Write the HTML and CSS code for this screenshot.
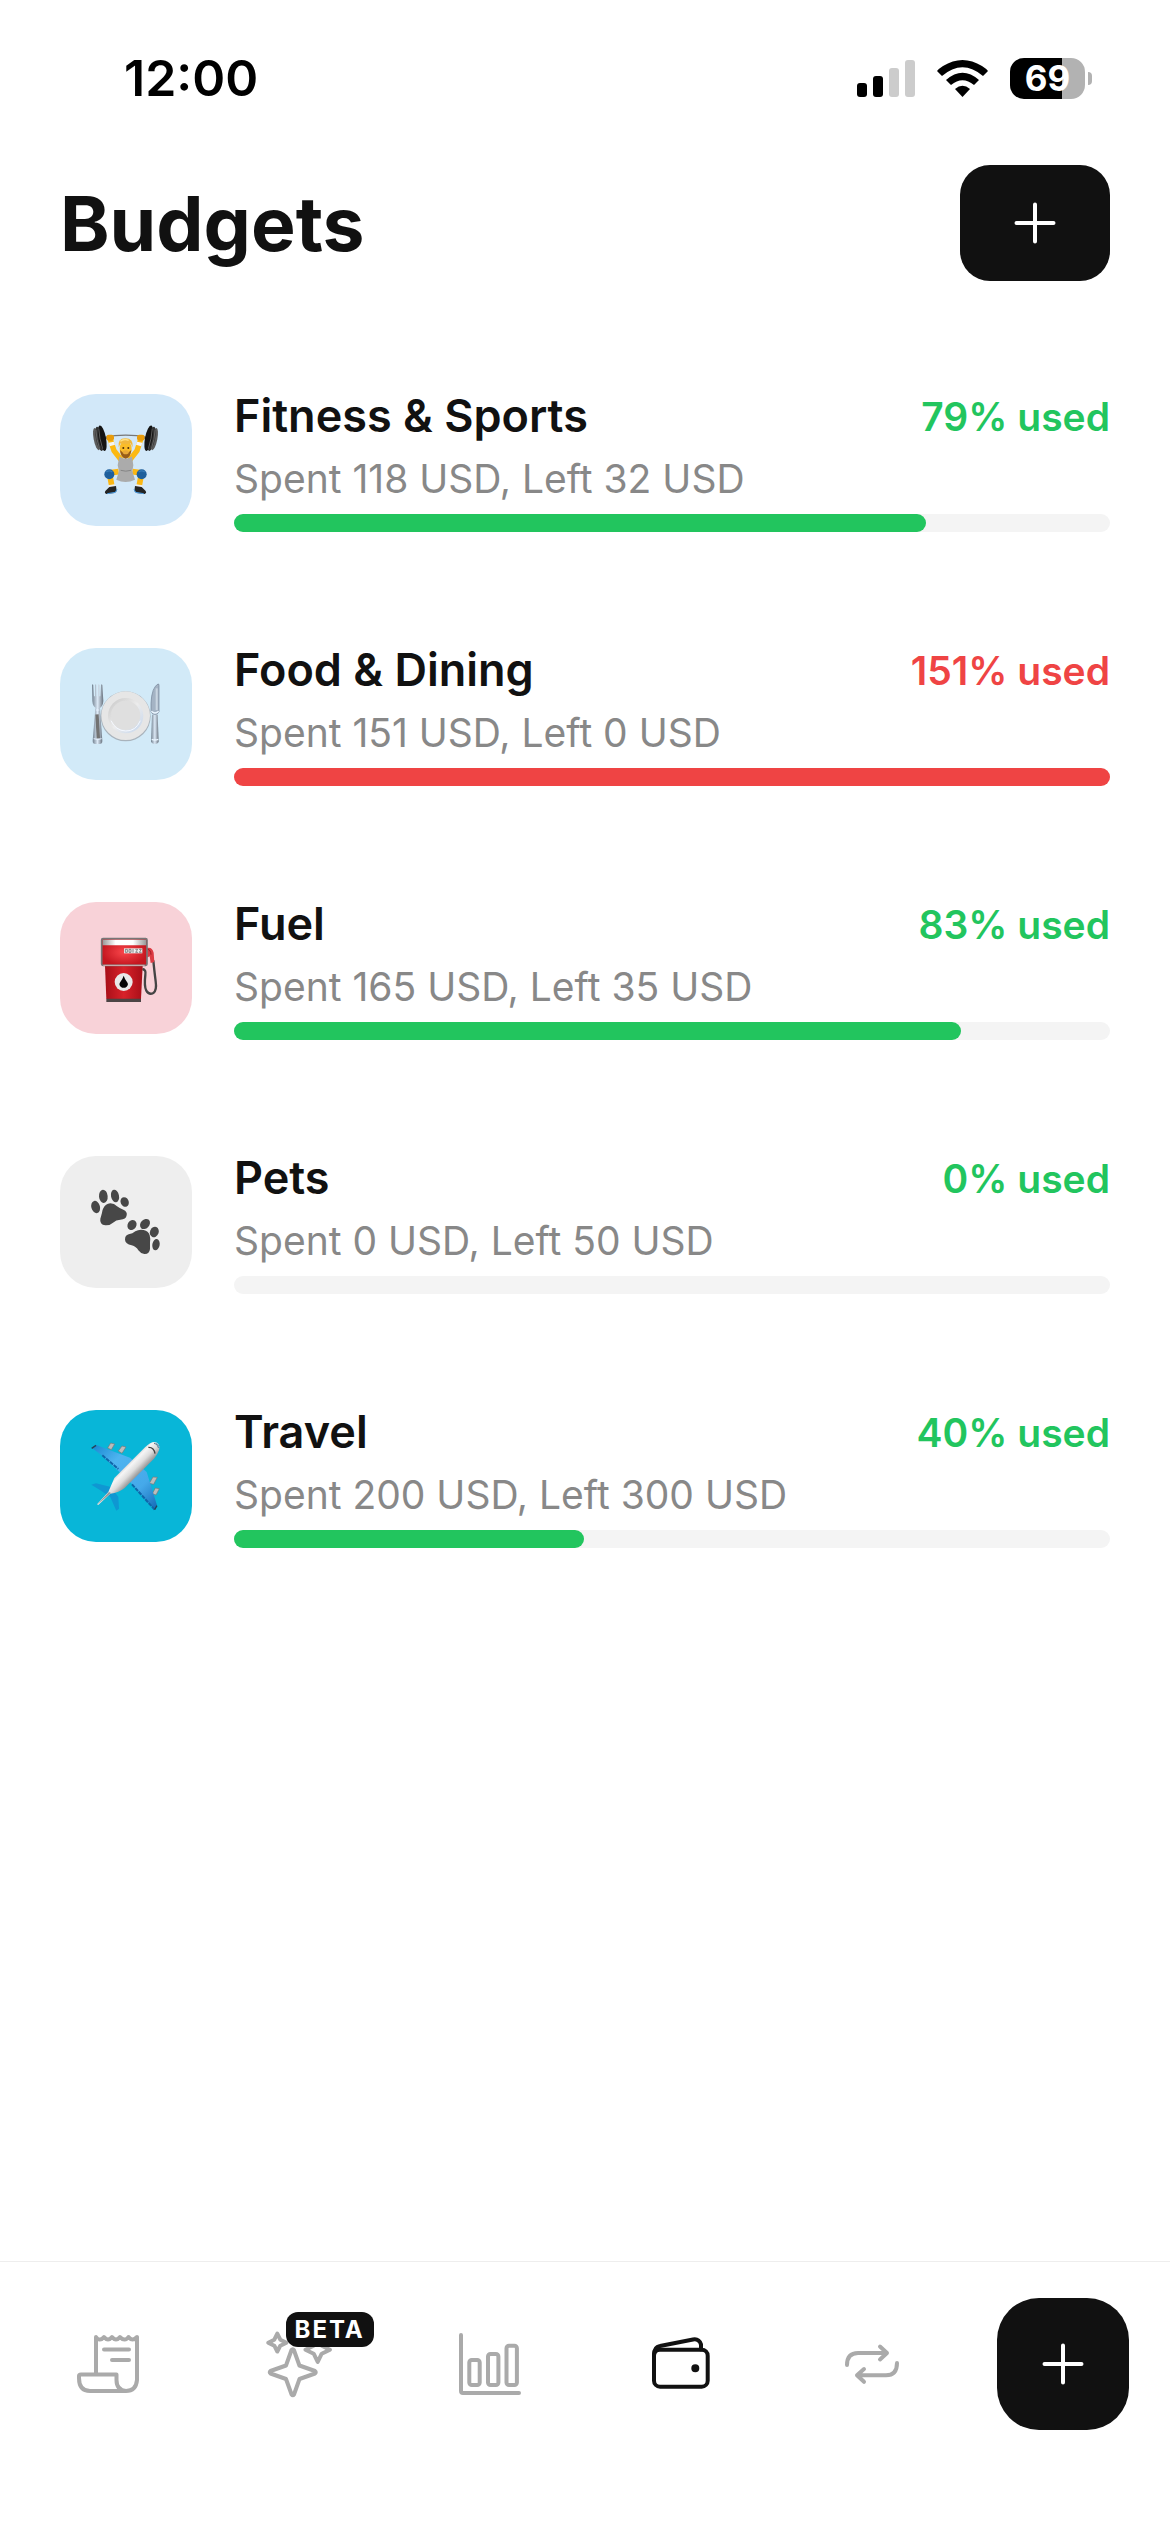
FILE: index.html
```
<!DOCTYPE html>
<html lang="en">
<head>
    <meta charset="UTF-8">
    <meta name="viewport" content="width=device-width, initial-scale=1.0">
    <title>Budgets</title>
    <link rel="stylesheet" href="styles.css">
</head>
<body>
    <div class="status-bar">
        <span class="time">12:00</span>
        <div class="status-icons">
            <svg width="58" height="37" viewBox="0 0 58 37">
                <rect x="0" y="23" width="10" height="14" rx="3"/>
                <rect x="16" y="16" width="10" height="21" rx="3"/>
                <rect x="32" y="8" width="10" height="29" rx="3" fill="#ccc"/>
                <rect x="48" y="0" width="10" height="37" rx="3" fill="#ccc"/>
            </svg>
            <svg width="51" height="37" viewBox="0 0 51 37">
                <path d="M0 11 Q2 8.500 6 6 Q25.500 -6 45 6 Q49 8.500 51 11 L46 16 Q25.500 -1.500 5 16 Z"/>
                <path d="M9 20 Q25.500 5.500 42 20 L37 25 Q25.500 15.500 14 25 Z"/>
                <path d="M18 29 Q25.500 22.500 33 29 L25.500 37 Z"/>
            </svg>
            <div class="battery">
                <span class="battery-body">69</span>
                <span class="battery-tip"></span>
            </div>
        </div>
    </div>

    <header class="header">
        <h1>Budgets</h1>
        <button class="button add-budget" aria-label="Add budget">
            <svg class="plus" viewBox="0 0 42 42"><path d="M21 2.500v37M2.500 21h37"/></svg>
        </button>
    </header>

    <main class="budgets">
        <div class="budget">
            <div class="budget-icon fitness">
                <svg viewBox="60 75 396 396">
                    <path d="M192 205 Q257 192 323 205" fill="none" stroke="#777" stroke-width="4"/>
                    <path d="M190 209l18-4M323 209l-18-4" stroke="#2a62ae" stroke-width="5"/>
                    <!-- legs -->
                    <path d="M236 308l-22 3-4 10 5 28M277 308l22 3 4 10-5 28" fill="none" stroke="#fbb714" stroke-width="17" stroke-linejoin="round"/>
                    <path d="M204 349l20-3 2 8-20 4zM287 346l21 3-2 9-18-4z" fill="#eee"/>
                    <path d="M196 366l12-12 20-3 2 15-6 6-26 3q-6-4-2-9zM317 366l-12-12-20-3-2 15 6 6 26 3q6-4 2-9z" fill="#242424"/>
                    <path d="M202 374l24-4 5-9M311 374l-24-4-5-9" fill="none" stroke="#4b9ee6" stroke-width="3"/>
                    <!-- arms -->
                    <path d="M211 211l11 34 22 28M302 211l-11 34-22 28" fill="none" stroke="#fcb912" stroke-width="16"/>
                    <path d="M206 221l16-3 3 9-16 5zM307 221l-16-3-3 9 16 5z" fill="#f5f5f5"/>
                    <rect x="199" y="197" width="23" height="18" rx="7" fill="#e99c0b"/>
                    <rect x="291" y="197" width="23" height="18" rx="7" fill="#e99c0b"/>
                    <path d="M238 262q19 15 38 0l4 27-3 17 8 26q-28 14-56 0l8-26-4-17z" fill="#ababab"/>
                    <path d="M242 304q15 5 31 0" fill="none" stroke="#858585" stroke-width="3"/>
                    <ellipse cx="257" cy="240" rx="18" ry="26" fill="#fbbd28"/>
                    <path d="M240 242q2 24 17 27 15-3 17-27-6 9-17 9t-17-9z" fill="#985c18"/>
                    <ellipse cx="257" cy="250" rx="9" ry="6" fill="#e8a837"/>
                    <path d="M236 235q-4-27 20-27 25 0 22 27l-6-12q-14 5-30 0z" fill="#f2b83c"/>
                    <path d="M241 217q11-9 25-3" fill="none" stroke="#ffe084" stroke-width="4"/>
                    <circle cx="250" cy="237" r="3" fill="#4b2c0a"/>
                    <circle cx="265" cy="237" r="3" fill="#4b2c0a"/>
                    <circle cx="208" cy="316" r="15" fill="#1f5f9c"/>
                    <circle cx="305" cy="316" r="15" fill="#1f5f9c"/>
                    <path d="M199 309q9-7 18 0M296 309q9-7 18 0" fill="none" stroke="#397db8" stroke-width="4"/>
                    <!-- plates -->
                    <g transform="rotate(-11 181 209)">
                        <ellipse cx="170" cy="208" rx="9" ry="34" fill="#5c5c5c"/>
                        <ellipse cx="178" cy="209" rx="10" ry="37" fill="#333"/>
                        <ellipse cx="187" cy="209" rx="11" ry="39" fill="#141414"/>
                        <path d="M173 180q-4 29 0 58M182 178q-4 30 0 62" fill="none" stroke="#777" stroke-width="2"/>
                    </g>
                    <g transform="rotate(11 332 209)">
                        <ellipse cx="343" cy="208" rx="9" ry="34" fill="#5c5c5c"/>
                        <ellipse cx="335" cy="209" rx="10" ry="37" fill="#333"/>
                        <ellipse cx="326" cy="209" rx="11" ry="39" fill="#141414"/>
                        <path d="M340 180q4 29 0 58M331 178q4 30 0 62" fill="none" stroke="#777" stroke-width="2"/>
                    </g>
                </svg>
            </div>
            <div class="budget-info">
                <div class="budget-row">
                    <h2>Fitness &amp; Sports</h2>
                    <span class="used">79% used</span>
                </div>
                <p>Spent 118 USD, Left 32 USD</p>
                <div class="bar"><div class="bar-fill" style="width: 79%"></div></div>
            </div>
        </div>

        <div class="budget">
            <div class="budget-icon food">
                <svg viewBox="60 57 396 396">
                    <defs>
                        <linearGradient id="steel" x1="0" x2="1">
                            <stop offset="0" stop-color="#71808f"/>
                            <stop offset=".5" stop-color="#dce9f6"/>
                            <stop offset="1" stop-color="#69737f"/>
                        </linearGradient>
                        <linearGradient id="plate" x1="0" y1="0" x2="1" y2="1">
                            <stop offset="0" stop-color="#c6c6c6"/>
                            <stop offset=".5" stop-color="#ececec"/>
                            <stop offset="1" stop-color="#c3d5ed"/>
                        </linearGradient>
                    </defs>
                    <circle cx="257" cy="262" r="75" fill="#a9b3bc"/>
                    <circle cx="257" cy="260" r="73" fill="#e6e6e6"/>
                    <circle cx="257" cy="260" r="53" fill="url(#plate)"/>
                    <circle cx="257" cy="259" r="44" fill="#dfdfdf"/>
                    <path d="M213 275q14 30 44 31t44-31" fill="none" stroke="#f4f8ff" stroke-width="3"/>
                    <path d="M156 168q2-4 4 0l2 34h3v-34q2-4 4 0l1 34h3l1-34q2-4 4 0v34h3l2-34q2-4 4 0l3 48q-1 18-14 23h-5q-13-5-14-23z" fill="url(#steel)"/>
                    <path d="M166 238h14l7 98q0 9-8 9h-13q-8 0-8-9z" fill="url(#steel)"/>
                    <path d="M171 256l4 72" stroke="#727272" stroke-width="10"/>
                    <path d="M161 329q12 5 24 0M168 243h10" stroke="#e6f1ff" stroke-width="3" fill="none"/>
                    <path d="M354 165q3-1 3 4v79q-4 9-12 9t-12-9v-25q2-48 21-58z" fill="#a4b3c4" stroke="#718094" stroke-width="2"/>
                    <path d="M350 178v65" stroke="#c9d5e1" stroke-width="6"/>
                    <path d="M336 257h17l3 80q-1 8-11 8t-12-8z" fill="url(#steel)"/>
                    <path d="M334 247q11 10 22 0M335 331q9 4 20 0" stroke="#e9f5ff" stroke-width="4" fill="none"/>
                </svg>
            </div>
            <div class="budget-info">
                <div class="budget-row">
                    <h2>Food &amp; Dining</h2>
                    <span class="used over">151% used</span>
                </div>
                <p>Spent 151 USD, Left 0 USD</p>
                <div class="bar"><div class="bar-fill over" style="width: 100%"></div></div>
            </div>
        </div>

        <div class="budget">
            <div class="budget-icon fuel">
                <svg viewBox="60 69 396 396">
                    <defs>
                        <radialGradient id="pump">
                            <stop offset="0" stop-color="#fa464b"/>
                            <stop offset="1" stop-color="#c51720"/>
                        </radialGradient>
                        <linearGradient id="pump-body" x1="0" x2="1">
                            <stop offset="0" stop-color="#a80e18"/>
                            <stop offset=".5" stop-color="#d8222a"/>
                            <stop offset="1" stop-color="#a80e18"/>
                        </linearGradient>
                        <linearGradient id="pump-top" x1="0" x2="1">
                            <stop offset="0" stop-color="#999"/>
                            <stop offset=".3" stop-color="#fff"/>
                            <stop offset=".7" stop-color="#fff"/>
                            <stop offset="1" stop-color="#999"/>
                        </linearGradient>
                    </defs>
                    <path d="M307 270q12 2 9 18-4 34 3 47 8 14 21 7 11-8 7-35-5-40-7-63" fill="none" stroke="#444" stroke-width="7"/>
                    <path d="M320 207q16-5 21 14l2 28-11 3-3-20-9 4z" fill="#dc3a43"/>
                    <path d="M322 211q10 0 11 16" fill="none" stroke="#9d1922" stroke-width="3"/>
                    <path d="M195 260h113l-5 100H199z" fill="url(#pump-body)"/>
                    <path d="M199 359h104v10H199z" fill="#4c4444"/>
                    <rect x="185" y="179" width="136" height="80" rx="4" fill="url(#pump)" stroke="#777" stroke-width="5"/>
                    <path d="M188 182h130v17H188z" fill="url(#pump-top)"/>
                    <path d="M190 259h124" stroke="#d7b7b7" stroke-width="3"/>
                    <rect x="252" y="208" width="55" height="15" fill="#eee"/>
                    <path d="M256 211h6v9h-6zM267 211h6v9h-6zM279 210v11M286 211h7l-6 9h7M297 211h7l-6 9h7" fill="none" stroke="#555" stroke-width="2"/>
                    <circle cx="251" cy="309" r="27" fill="#e9e9e9"/>
                    <path d="M251 290q4 12 10 19 6 8-1 14-9 7-18 0-7-6-1-14 6-7 10-19z" fill="#050505"/>
                </svg>
            </div>
            <div class="budget-info">
                <div class="budget-row">
                    <h2>Fuel</h2>
                    <span class="used">83% used</span>
                </div>
                <p>Spent 165 USD, Left 35 USD</p>
                <div class="bar"><div class="bar-fill" style="width: 83%"></div></div>
            </div>
        </div>

        <div class="budget">
            <div class="budget-icon pets">
                <svg viewBox="60 81 396 396" fill="#474747">
                    <path d="M190 238q6-14 21-15 12 0 20 9 7 6 19 10 13 6 10 17-2 13-19 13-13 0-22 9-10 9-23 8-18-3-15-20 3-10 5-18 0-6 4-13z"/>
                    <ellipse cx="167" cy="234" rx="13" ry="19" transform="rotate(-15 167 234)"/>
                    <ellipse cx="190" cy="202" rx="13" ry="20" transform="rotate(-5 190 202)"/>
                    <ellipse cx="225" cy="201" rx="12" ry="19" transform="rotate(-12 225 201)"/>
                    <ellipse cx="254" cy="219" rx="12" ry="15" transform="rotate(-25 254 219)"/>
                    <path d="M266 316q12-2 20-9 11-7 25-4 14 3 18 16 3 11 1 21v20q-2 16-17 15-11-1-18-11-6-11-20-15-19-4-20-17 0-13 11-16z"/>
                    <ellipse cx="276" cy="288" rx="13" ry="16" transform="rotate(30 276 288)"/>
                    <ellipse cx="315" cy="285" rx="13" ry="17" transform="rotate(43 315 285)"/>
                    <ellipse cx="343" cy="309" rx="13" ry="16" transform="rotate(22 343 309)"/>
                    <ellipse cx="348" cy="347" rx="11" ry="17" transform="rotate(10 348 347)"/>
                </svg>
            </div>
            <div class="budget-info">
                <div class="budget-row">
                    <h2>Pets</h2>
                    <span class="used">0% used</span>
                </div>
                <p>Spent 0 USD, Left 50 USD</p>
                <div class="bar"><div class="bar-fill" style="width: 0%"></div></div>
            </div>
        </div>

        <div class="budget">
            <div class="budget-icon travel">
                <svg viewBox="60 63 396 396">
                    <defs>
                        <linearGradient id="wing" x1="0" y1="0" x2="1" y2="1">
                            <stop offset="0" stop-color="#1687d1"/>
                            <stop offset=".3" stop-color="#4fb4f0"/>
                            <stop offset=".7" stop-color="#45a9ea"/>
                            <stop offset="1" stop-color="#1268b5"/>
                        </linearGradient>
                        <linearGradient id="fuselage" x1=".36" y1=".36" x2=".62" y2=".62">
                            <stop offset="0" stop-color="#999"/>
                            <stop offset=".35" stop-color="#f6f6f6"/>
                            <stop offset=".6" stop-color="#ddd"/>
                            <stop offset="1" stop-color="#777"/>
                        </linearGradient>
                    </defs>
                    <path d="M154 287l14-4 45 11 22 30 2 35-8 6-18-41-30-20z" fill="#0f97d2"/>
                    <g fill="#bcbcbc" stroke="#777" stroke-width="2">
                        <path d="M212 162l12 3-10 17-11-5zM246 171l12 3-12 19-11-7zM339 264l13 1-11 21-13-3zM346 297l12 2-10 19-11-4z"/>
                    </g>
                    <path d="M156 177l13-9 101 38 50 43 31 100-7 14-64-74-96-91z" fill="url(#wing)"/>
                    <path d="M187 199l48 41M276 286l68 76" stroke="#1065a9" stroke-width="6" stroke-dasharray="12 3"/>
                    <path d="M155 178l13-9M344 362l7-12" stroke="#254258" stroke-width="4"/>
                    <path d="M171 346l34-37 18-42 92-92q27-26 40-10 11 14-13 44l-88 88q-17 14-43 17l-36 34z" fill="url(#fuselage)"/>
                    <path d="M171 347l36-38 6 3z" fill="#999"/>
                    <path d="M325 175q17-1 20 19M343 163q11 1 13 14" fill="none" stroke="#444" stroke-width="4"/>
                    <path d="M345 162q10 3 11 14" fill="none" stroke="#7ac7f2" stroke-width="3"/>
                </svg>
            </div>
            <div class="budget-info">
                <div class="budget-row">
                    <h2>Travel</h2>
                    <span class="used">40% used</span>
                </div>
                <p>Spent 200 USD, Left 300 USD</p>
                <div class="bar"><div class="bar-fill" style="width: 40%"></div></div>
            </div>
        </div>
    </main>

    <nav class="tabs">
        <a class="tab" href="#" aria-label="Transactions">
            <svg viewBox="0 0 72 72">
                <path d="M24 46V9q2 3 4 2.500 2 0 4-2.500 2 2.500 4 2.500t4-2.500q2 2.500 4 2.500t4-2.500q2 2.500 4.500 2.500t4-2.500q2 2.500 4 2.500T65 9v43q-1 11-11 11H18Q7 63 7 50v-2q0-1.500 2-1.500h35.500V52q0 10 9.500 11M32 21.500h25M40 32h17"/>
            </svg>
        </a>
        <a class="tab" href="#" aria-label="Assistant">
            <svg viewBox="0 0 72 72">
                <path d="M28.500 22q1.200-1.500 2.400 0l5.500 15.500L52 43q1.500 1.200 0 2.500L36.500 51 31 66.500q-1.200 1.500-2.400 0L23 51 7.500 45.500Q6 44.300 7.500 43L23 37.500z"/>
                <path d="M14.300 5.500L17.300 11.700 23.500 14.700 17.300 17.700 14.300 23.500 11.300 17.700 5.200 14.700 11.300 11.700zM54.700 9.500L58.700 17.700 67 21.700 58.700 25.700 54.700 34 50.700 25.700 42.400 21.700 50.700 17.700z"/>
            </svg>
            <span class="badge">BETA</span>
        </a>
        <a class="tab" href="#" aria-label="Statistics">
            <svg viewBox="0 0 72 72">
                <path d="M7 7v56q0 2 2 2h56"/>
                <rect x="15.300" y="32" width="10.400" height="25" rx="2.500"/>
                <rect x="34" y="26" width="10.400" height="31" rx="2.500"/>
                <rect x="52.500" y="17.700" width="10.400" height="39.300" rx="2.500"/>
            </svg>
        </a>
        <a class="tab active" href="#" aria-label="Budgets">
            <svg viewBox="0 0 72 72">
                <rect x="9" y="21.700" width="53.700" height="37" rx="6"/>
                <path d="M9 27q0-8 6-9l33-6.500q6-1 8 5v5"/>
                <circle cx="50.300" cy="40.300" r="2"/>
            </svg>
        </a>
        <a class="tab" href="#" aria-label="Recurring">
            <svg viewBox="0 0 72 72">
                <path d="M11 37q0-12 11-12h29M44 18.500l7 6.500-7 6.500M61 35q0 12.300-11 12.300H21.500M28 41l-7 6.300 7 6.500"/>
            </svg>
        </a>
        <div class="tab">
            <button class="button add-entry" aria-label="Add transaction">
                <svg class="plus" viewBox="0 0 42 42"><path d="M21 2.500v37M2.500 21h37"/></svg>
            </button>
        </div>
    </nav>
</body>
</html>
```
FILE: styles.css
```
* {
    box-sizing: border-box;
}
body {
    display: flex;
    flex-direction: column;
    min-height: 100vh;
    margin: 0;
    background: #fff;
    color: #111;
    font-family: Inter, "Liberation Sans", sans-serif;
}
h1, h2, p {
    margin: 0;
}

/* Status bar */
.status-bar {
    display: flex;
    align-items: center;
    justify-content: space-between;
    height: 156px;
    padding: 0 78px 0 124px;
    color: #000;
}
.time {
    font-size: 50px;
    font-weight: 600;
}
.status-icons {
    display: flex;
    align-items: center;
    gap: 22px;
}
.battery {
    display: flex;
    align-items: center;
    gap: 3px;
}
.battery-body {
    width: 75px;
    border-radius: 14px;
    background: linear-gradient(to right, #000 69%, #b2b2b2 69%);
    color: #fff;
    font-size: 35px;
    font-weight: 700;
    line-height: 41px;
    text-align: center;
}
.battery-tip {
    width: 4px;
    height: 13px;
    border-radius: 0 6px 6px 0;
    background: #b2b2b2;
}

/* Header */
.header {
    display: flex;
    align-items: center;
    justify-content: space-between;
    padding: 9px 60px 0;
}
.header h1 {
    font-size: 75px;
    font-weight: 700;
}
.button {
    display: flex;
    align-items: center;
    justify-content: center;
    padding: 0;
    border: none;
    background: #111;
    cursor: pointer;
}
.add-budget {
    width: 150px;
    height: 116px;
    border-radius: 30px;
}
.plus {
    width: 42px;
    height: 42px;
    fill: none;
    stroke: #fff;
    stroke-width: 4;
    stroke-linecap: round;
}

/* Budget list */
.budgets {
    display: flex;
    flex: 1;
    flex-direction: column;
    gap: 110px;
    padding: 107px 60px;
}
.budget {
    display: flex;
    align-items: center;
    gap: 42px;
}
.budget-icon {
    flex: none;
    width: 132px;
    height: 132px;
    border-radius: 36px;
}
.budget-icon svg {
    display: block;
}
.fitness {
    background: #d2e8f9;
}
.food {
    background: #d2eaf8;
}
.fuel {
    background: #f8d2d8;
}
.pets {
    background: #eee;
}
.travel {
    background: #08b6d8;
}
.budget-info {
    display: flex;
    flex: 1;
    flex-direction: column;
    gap: 10px;
}
.budget-row {
    display: flex;
    align-items: center;
    justify-content: space-between;
}
.budget h2 {
    font-size: 45px;
    font-weight: 600;
    line-height: 56px;
}
.budget p {
    color: #888;
    font-size: 39px;
    line-height: 50px;
}
.used {
    color: #22c55e;
    font-size: 39px;
    font-weight: 600;
}
.used.over {
    color: #ef4444;
}
.bar {
    height: 18px;
    border-radius: 9px;
    background: #f4f4f4;
}
.bar-fill {
    height: 100%;
    border-radius: 9px;
    background: #22c55e;
}
.bar-fill.over {
    background: #ef4444;
}

/* Tabs */
.tabs {
    display: flex;
    padding: 36px 12px 102px;
    border-top: 1px solid #eee;
}
.tab {
    position: relative;
    display: flex;
    flex: 1;
    align-items: center;
    justify-content: center;
    height: 132px;
    color: #aaa;
}
.tab.active {
    color: #111;
}
.tab > svg {
    width: 72px;
    height: 72px;
    fill: none;
    stroke: currentColor;
    stroke-width: 4;
    stroke-linecap: round;
    stroke-linejoin: round;
}
.badge {
    position: absolute;
    top: 14px;
    left: 50%;
    margin-left: -13px;
    padding: 0 9px;
    border-radius: 12px;
    background: #111;
    color: #fff;
    font-size: 24px;
    font-weight: 700;
    letter-spacing: 2px;
    line-height: 35px;
}
.add-entry {
    width: 132px;
    height: 132px;
    border-radius: 42px;
}
```
